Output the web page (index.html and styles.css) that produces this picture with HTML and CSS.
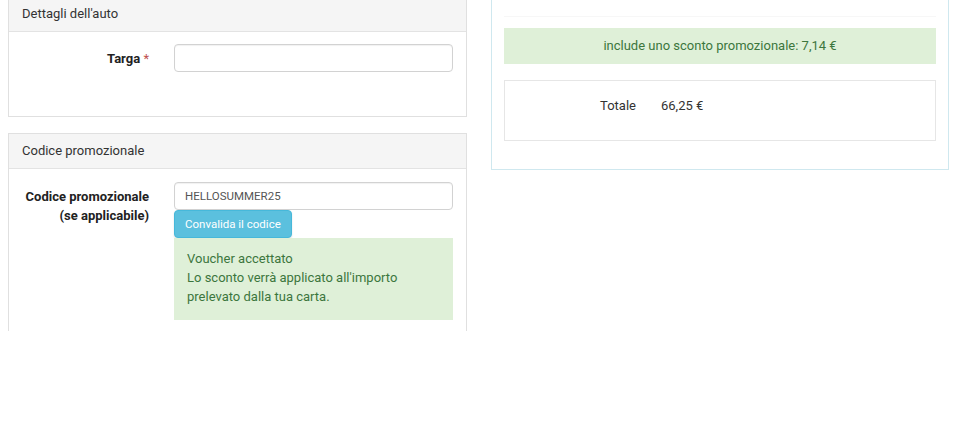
FILE: index.html
```html
<!DOCTYPE html>
<html lang="it">
<head>
<meta charset="utf-8">
<link rel="stylesheet" href="styles.css">
</head>
<body>
<div class="viewport">
  <div class="row">
    <div class="col-left">
      <div class="panel">
        <div class="panel-heading">Dettagli dell'auto</div>
        <div class="panel-body body-car">
          <div class="form-row">
            <label class="form-label">Targa <span class="req">*</span></label>
            <div class="form-field">
              <input class="input" type="text" value="">
            </div>
          </div>
        </div>
      </div>
      <div class="panel panel-promo">
        <div class="panel-heading">Codice promozionale</div>
        <div class="panel-body body-promo">
          <div class="form-row">
            <label class="form-label">Codice promozionale<br>(se applicabile)</label>
            <div class="form-field">
              <input class="input" type="text" value="HELLOSUMMER25">
              <button class="btn-info" type="button">Convalida il codice</button>
              <div class="alert-success">Voucher accettato<br>Lo sconto verrà applicato all'importo<br>prelevato dalla tua carta.</div>
            </div>
          </div>
        </div>
      </div>
    </div>
    <div class="col-right">
      <div class="panel-summary">
        <div class="sep"></div>
        <div class="promo-note">include uno sconto promozionale: 7,14 €</div>
        <div class="total-box">
          <span class="total-label">Totale</span>
          <span class="total-value">66,25 €</span>
        </div>
      </div>
    </div>
  </div>
</div>
</body>
</html>
```

FILE: styles.css
```css
html, body {
  margin: 0;
  padding: 0;
  background: #fff;
}
body {
  font-family: Roboto, "Liberation Sans", sans-serif;
  font-size: 13px;
  line-height: 19px;
  color: #333;
}
.viewport {
  height: 331px;
  overflow: hidden;
}
.row {
  display: flex;
  align-items: flex-start;
  gap: 24px;
  margin-top: -4px;
  padding-left: 8px;
}
.col-left {
  width: 459px;
  flex: none;
}
.col-right {
  width: 458px;
  flex: none;
}
.panel {
  border: 1px solid #e0e0e0;
  background: #fff;
}
.panel-promo {
  margin-top: 16px;
}
.panel-heading {
  background: #f5f5f5;
  border-bottom: 1px solid #e3e3e3;
  padding: 7px 13px;
  line-height: 20px;
  color: #333;
}
.body-car {
  height: 72px;
  padding-top: 12px;
}
.body-promo {
  padding-top: 13px;
  padding-bottom: 30px;
}
.form-row {
  display: flex;
  gap: 25px;
}
.form-label {
  width: 140px;
  flex: none;
  text-align: right;
  font-weight: bold;
  padding-top: 5px;
  color: #222;
}
.req {
  color: #c0504d;
  font-weight: normal;
}
.form-field {
  width: 279px;
  flex: none;
  display: flex;
  flex-direction: column;
  align-items: flex-start;
}
.input {
  box-sizing: border-box;
  width: 279px;
  height: 28px;
  margin: 0;
  border: 1px solid #d2d2d2;
  border-radius: 4px;
  box-shadow: inset 0 1px 1px rgba(0,0,0,.06);
  padding: 0 10px;
  font-family: Roboto, "Liberation Sans", sans-serif;
  font-size: 11.5px;
  color: #555;
  background: #fff;
}
.btn-info {
  box-sizing: border-box;
  height: 28px;
  margin: 0;
  padding: 0 10px;
  background: #5bc0de;
  border: 1px solid #46b8da;
  border-radius: 4px;
  color: #fff;
  font-family: Roboto, "Liberation Sans", sans-serif;
  font-size: 11.5px;
  box-shadow: 0 1px 2px rgba(0,0,0,.12);
}
.alert-success {
  box-sizing: border-box;
  width: 279px;
  background: #dff0d8;
  color: #3c763d;
  padding: 11px 13px 14px;
  line-height: 19px;
}
.panel-summary {
  border: 1px solid #cfe8ef;
  border-top-color: transparent;
  padding: 19px 12px 28px 12px;
  background: #fff;
}
.sep {
  height: 1px;
  background: #f7f7f7;
  margin-bottom: 11px;
}
.promo-note {
  height: 36px;
  line-height: 36px;
  background: #dff0d8;
  color: #3c763d;
  text-align: center;
}
.total-box {
  margin-top: 16px;
  border: 1px solid #e6e6e6;
  display: flex;
  gap: 25px;
  padding-top: 15px;
  box-sizing: border-box;
  height: 61px;
}
.total-label {
  width: 131px;
  text-align: right;
  flex: none;
}
```
